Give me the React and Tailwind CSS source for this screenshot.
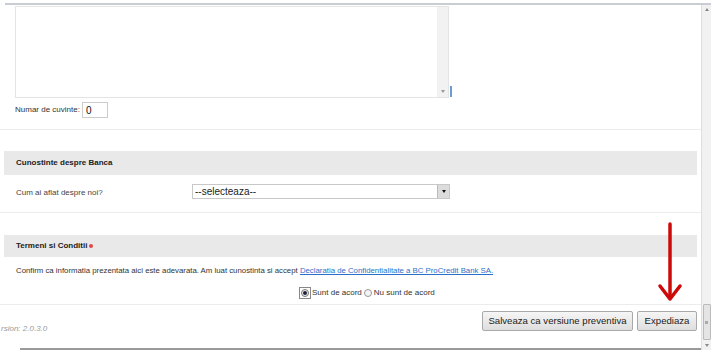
export default function App() {
  const f = { fontFamily: '"Liberation Sans", Arial, sans-serif' };
  return (
    <div className="w-[711px] h-[350px] bg-white overflow-hidden relative text-[#333]" style={f}>
      <div className="h-[3px]" />
      <div className="h-[2px] bg-[#c9cdd1] ml-[5px]" />
      <div className="flex h-[345px]">
        {/* main content */}
        <div className="w-[701px] flex flex-col">
          {/* textarea */}
          <div className="flex items-end h-[93px]">
            <div className="ml-[15px] mt-[1px] w-[434px] h-[92px] border border-[#e4e4e4] flex">
              <div className="flex-1 bg-white" />
              <div className="w-[11px] bg-[#f2f2f2] flex flex-col justify-end items-center pb-[4px]">
                <div className="w-0 h-0 border-l-[2px] border-r-[2px] border-t-[3px] border-l-transparent border-r-transparent border-t-[#999]" />
              </div>
            </div>
            <div className="w-[2px] h-[11px] bg-[#6b9bd0] ml-[1px] mb-[1px]" />
          </div>
          {/* word count */}
          <div className="flex items-center pl-[15px] mt-[4px] h-[16px]">
            <span className="text-[8px] text-[#333]">Numar de cuvinte:</span>
            <div className="ml-[2px] w-[26px] h-[16px] border border-[#ccc] flex items-center pl-[3px] text-[10px] text-[#111]">0</div>
          </div>
          <div className="h-[11px]" />
          <div className="h-px bg-[#ececec]" />
          <div className="h-[21px]" />
          {/* section 1 */}
          <div className="mx-[4px] h-[24px] bg-[#e9e9e9] flex items-center pl-[12px]">
            <span className="text-[8px] font-bold text-[#222]">Cunostinte despre Banca</span>
          </div>
          <div className="h-[37px] flex items-center pb-[4px]">
            <span className="pl-[16px] w-[192px] text-[8px] text-[#444] pt-[3px]">Cum ai aflat despre noi?</span>
            <div className="w-[258px] h-[15px] border border-[#c8c8c8] flex bg-white">
              <span className="flex-1 text-[10px] leading-[13px] pl-[2px] text-[#222]">--selecteaza--</span>
              <div className="w-[12px] h-full bg-[#dcdcdc] border-l border-[#bbb] flex items-center justify-center">
                <div className="w-0 h-0 border-l-[2px] border-r-[2px] border-t-[3px] border-l-transparent border-r-transparent border-t-[#111]" />
              </div>
            </div>
          </div>
          <div className="h-px bg-[#ececec]" />
          <div className="h-[22px]" />
          {/* section 2 */}
          <div className="mx-[4px] h-[23px] bg-[#e9e9e9] flex items-center pl-[12px]">
            <span className="text-[8px] font-bold text-[#222]">Termeni si Conditii</span>
            <span className="ml-[2px] w-[4px] h-[4px] rounded-full bg-[#e04848]" />
          </div>
          <div className="h-[24px] flex items-center pl-[16px] pt-[2px]">
            <span className="text-[7.8px] text-[#333] whitespace-nowrap">
              Confirm ca informatia prezentata aici este adevarata. Am luat cunostinta si accept{" "}
              <span className="text-[#2a6fc9] underline">Declaratia de Confidentialitate a BC ProCredit Bank SA.</span>
            </span>
          </div>
          <div className="h-[23px] flex items-center pl-[299px]">
            <div className="w-[12px] h-[12px] border border-[#888] flex items-center justify-center">
              <div className="w-[8px] h-[8px] rounded-full border border-[#777] bg-[#e8eef5] flex items-center justify-center">
                <div className="w-[4px] h-[4px] rounded-full bg-[#223]" />
              </div>
            </div>
            <span className="ml-[1px] text-[8px] text-[#333]">Sunt de acord</span>
            <div className="ml-[2px] w-[8px] h-[8px] rounded-full border border-[#999] bg-[#f4f4f4]" />
            <span className="ml-[2px] text-[8px] text-[#333]">Nu sunt de acord</span>
          </div>
          <div className="h-px bg-[#ececec]" />
          {/* footer */}
          <div className="flex items-start pt-[6px] h-[43px]">
            <span className="mt-[12px] ml-[1px] text-[8px] italic text-[#999] whitespace-nowrap">rsion: 2.0.3.0</span>
            <div className="flex-1" />
            <div className="flex gap-[4px] pr-[4px]">
              <div className="w-[151px] h-[20px] border border-[#a9a9a9] rounded-[2px] bg-gradient-to-b from-[#f6f6f6] to-[#dedede] flex items-center justify-center text-[9.6px] text-[#222]">Salveaza ca versiune preventiva</div>
              <div className="w-[60px] h-[20px] border border-[#a9a9a9] rounded-[2px] bg-gradient-to-b from-[#f6f6f6] to-[#dedede] flex items-center justify-center text-[9.6px] text-[#222]">Expediaza</div>
            </div>
          </div>
          <div className="h-[2px] shrink-0 bg-[#9a9a9a] ml-[20px]" />
        </div>
        {/* page scrollbar */}
        <div className="w-[10px] bg-[#f1f1f1] border-l border-[#dedede] flex flex-col items-center">
          <div className="mt-[3px] w-0 h-0 border-l-[2px] border-r-[2px] border-b-[3px] border-l-transparent border-r-transparent border-b-[#888]" />
          <div className="flex-1" />
          <div className="w-[8px] h-[36px] bg-[#e4e4e4] border border-[#bbb] rounded-[1px] flex items-center justify-center">
            <div className="w-[3px] h-[3px] bg-[#aaa]" />
          </div>
          <div className="mt-[4px] mb-[3px] w-0 h-0 border-l-[2px] border-r-[2px] border-t-[3px] border-l-transparent border-r-transparent border-t-[#888]" />
        </div>
      </div>
      {/* red arrow overlay */}
      <svg className="absolute left-[655px] top-[222px]" width="30" height="82" viewBox="0 0 30 82">
        <line x1="15" y1="2" x2="15" y2="74" stroke="#cc0a0a" strokeWidth="3.5" strokeLinecap="round" />
        <polyline points="5,64 15,77 25,64" fill="none" stroke="#cc0a0a" strokeWidth="3.5" strokeLinecap="round" strokeLinejoin="round" />
      </svg>
    </div>
  );
}
